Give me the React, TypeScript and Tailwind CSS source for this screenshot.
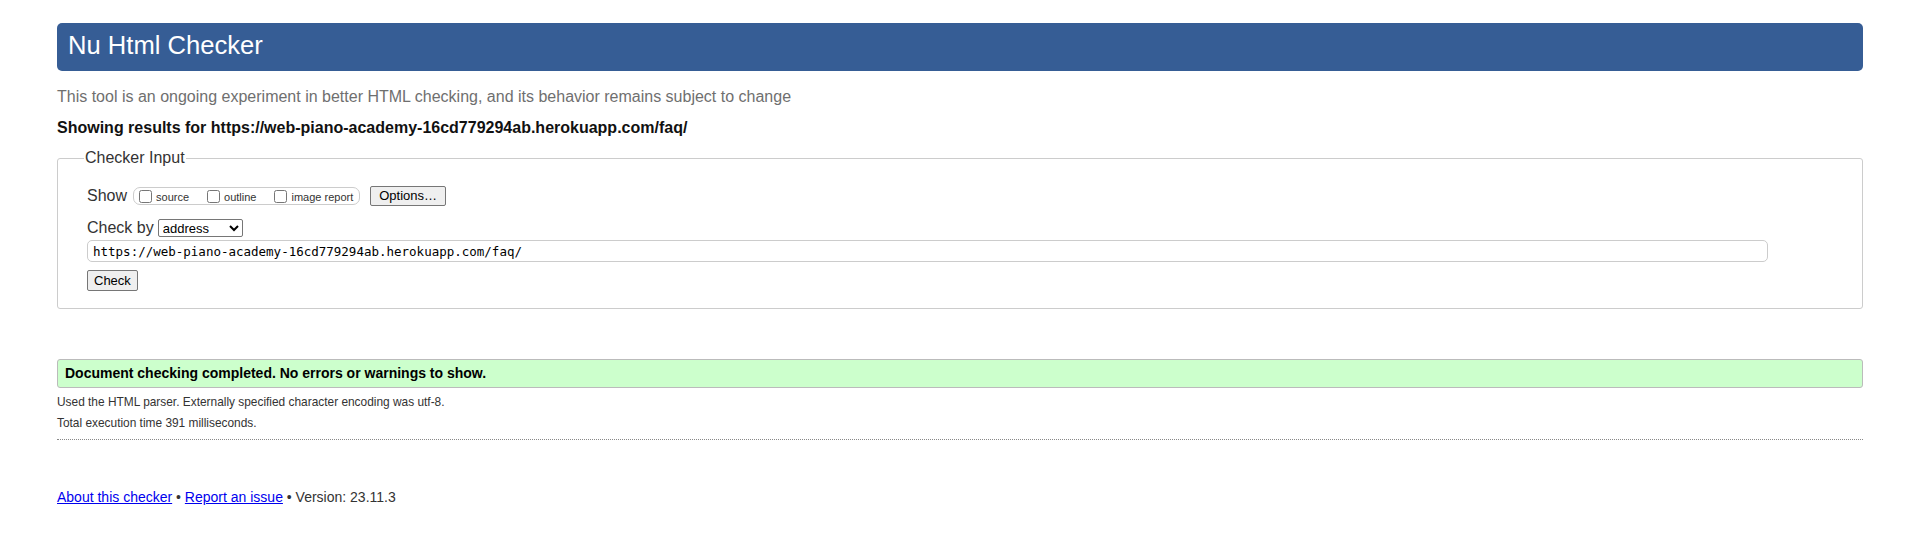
import React from "react";

const url = "https://web-piano-academy-16cd779294ab.herokuapp.com/faq/";

const showOptions = [
  { id: "source", label: "source" },
  { id: "outline", label: "outline" },
  { id: "image", label: "image report" },
];

export default function App() {
  return (
    <div className="min-h-screen bg-white px-[57px] pt-[23px] font-['Liberation_Sans',Arial,sans-serif] text-[#333]">
      {/* Title bar */}
      <header className="h-[48px] rounded-[5px] bg-[#365d95] px-[11px]">
        <h1 className="text-[25.6px] leading-[44px] text-white">Nu Html Checker</h1>
      </header>

      <p className="mt-[17px] text-[16px] leading-[18px] text-[#6f6f6f]">
        This tool is an ongoing experiment in better HTML checking, and its behavior remains subject to change
      </p>
      <p className="mt-[13px] text-[16px] font-bold leading-[18px] text-[#111]">
        Showing results for {url}
      </p>

      {/* Checker input */}
      <fieldset className="mt-[12px] rounded-[3px] border border-[#ccc] pb-[16px] pl-[26px]">
        <legend className="px-[1px] text-[16px] leading-[18px] text-[#333]">Checker Input</legend>
        <div className="mt-[19px] pl-[3px]">
          <div className="flex h-[20px] items-center">
            <span className="mr-[6px] text-[16px] leading-[18px]">Show</span>
            <div className="flex h-[18px] items-center gap-[18px] rounded-[7px] border border-[#ccc] pl-[5px] pr-[6px]">
              {showOptions.map((o) => (
                <label key={o.id} className="flex items-center whitespace-nowrap text-[11px] leading-[13px]">
                  <input type="checkbox" className="mr-[4px] h-[13px] w-[13px]" />
                  <span className="pt-[2px]">{o.label}</span>
                </label>
              ))}
            </div>
            <button
              type="button"
              className="ml-[10px] h-[20px] rounded-[2px] border border-[#767676] bg-[#efefef] px-[8px] text-[13px] leading-[18px] text-black"
            >
              Options…
            </button>
          </div>

          <div className="mt-[13px] flex h-[18px] items-center">
            <span className="mr-[4px] text-[16px] leading-[18px]">Check by</span>
            <select
              defaultValue="address"
              className="h-[18px] w-[85px] rounded-[2px] border border-[#767676] text-[13px] leading-[16px] text-black"
            >
              <option value="address">address</option>
              <option value="file">file upload</option>
              <option value="text">text input</option>
            </select>
          </div>

          <input
            type="text"
            defaultValue={url}
            className="mt-[3px] block h-[22px] w-[1681px] rounded-[5px] border border-[#ccc] px-[5px] font-['DejaVu_Sans_Mono',monospace] text-[12.5px] text-black"
          />

          <button
            type="button"
            className="mt-[8px] h-[21px] rounded-[2px] border border-[#767676] bg-[#efefef] px-[6px] text-[13px] leading-[18px] text-black"
          >
            Check
          </button>
        </div>
      </fieldset>

      {/* Results */}
      <div className="mt-[50px] flex h-[29px] items-center rounded-[3px] border border-[#bbb] bg-[#ccffcc] px-[7px] text-[14px] font-bold text-black">
        Document checking completed. No errors or warnings to show.
      </div>
      <p className="mt-[7px] text-[11.9px] leading-[14px]">
        Used the HTML parser. Externally specified character encoding was utf-8.
      </p>
      <p className="mt-[7px] text-[11.9px] leading-[14px]">Total execution time 391 milliseconds.</p>
      <div className="mt-[9px] border-t border-dotted border-[#888]" />

      {/* Footer */}
      <p className="mt-[49px] text-[14px] leading-[16px]">
        <a href="#" className="text-[#0000ee] underline">About this checker</a>
        {" • "}
        <a href="#" className="text-[#0000ee] underline">Report an issue</a>
        {" • Version: 23.11.3"}
      </p>
    </div>
  );
}
